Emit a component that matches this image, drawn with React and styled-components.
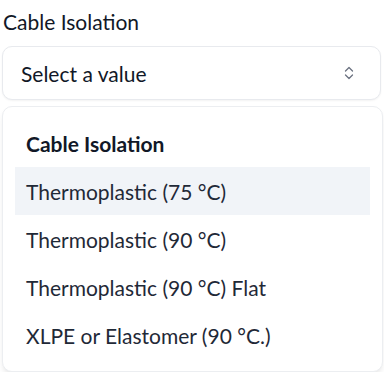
import React from "react";
import styled, { createGlobalStyle } from "styled-components";

const GlobalStyle = createGlobalStyle`
  html, body {
    margin: 0;
    padding: 0;
    background: #ffffff;
  }
  body {
    font-family: Lato, "Noto Sans", sans-serif;
    color: #111827;
  }
`;

const options = [
  "Thermoplastic (75 °C)",
  "Thermoplastic (90 °C)",
  "Thermoplastic (90 °C) Flat",
  "XLPE or Elastomer (90 °C.)",
];

export default function App() {
  return (
    <>
      <GlobalStyle />
      <Field>
        <Label>Cable Isolation</Label>
        <Trigger>
          <span>Select a value</span>
          <svg width="14" height="16" viewBox="0 0 14 16" fill="none">
            <path
              d="M3.5 6 L7 2.5 L10.5 6 M3.5 10 L7 13.5 L10.5 10"
              stroke="#6b7280"
              strokeWidth="1.3"
              strokeLinecap="round"
              strokeLinejoin="round"
            />
          </svg>
        </Trigger>
        <Menu>
          <GroupLabel>Cable Isolation</GroupLabel>
          {options.map((opt, i) => (
            <Option key={opt} $active={i === 0}>
              {opt}
            </Option>
          ))}
        </Menu>
      </Field>
    </>
  );
}

const Field = styled.div`
  display: flex;
  flex-direction: column;
  padding: 8px 3px 0 2px;
`;

const Label = styled.label`
  font-size: 21px;
  line-height: 28px;
  padding-left: 1px;
  margin-bottom: 10px;
`;

const Trigger = styled.button`
  display: flex;
  align-items: center;
  justify-content: space-between;
  height: 54px;
  padding: 0 24px 0 18px;
  background: #fff;
  border: 1px solid #e8eaee;
  border-radius: 10px;
  box-shadow: 0 1px 2px rgba(0, 0, 0, 0.05);
  font-family: inherit;
  font-size: 21px;
  color: #111827;
  text-align: left;
`;

const Menu = styled.div`
  margin: 6px -2px 0 0;
  padding: 12px;
  background: #fff;
  border: 1px solid #eceef1;
  border-radius: 10px;
  box-shadow: 0 4px 6px -2px rgba(0, 0, 0, 0.12);
`;

const GroupLabel = styled.div`
  height: 48px;
  display: flex;
  align-items: center;
  padding: 0 11px;
  font-size: 21px;
  font-weight: 700;
  color: #111827;
`;

const Option = styled.div`
  height: 48px;
  display: flex;
  align-items: center;
  padding: 0 11px;
  font-size: 21px;
  color: #1f2937;
  background: ${(p) => (p.$active ? "#f1f4f8" : "transparent")};
`;
